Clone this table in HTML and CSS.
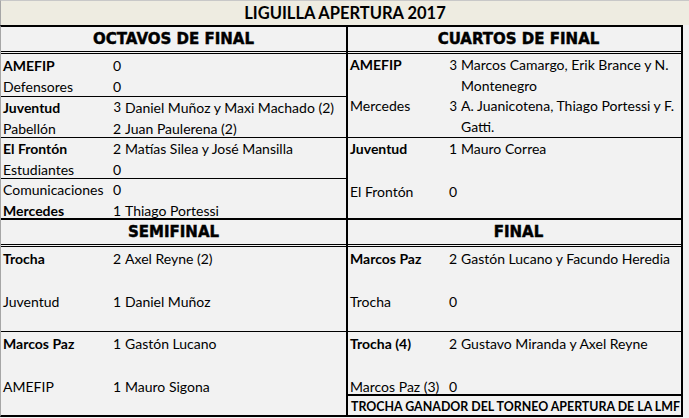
FILE: index.html
```html
<!DOCTYPE html>
<html lang="es">
<head>
<meta charset="utf-8">
<title>Liguilla Apertura 2017</title>
<link rel="stylesheet" href="styles.css">
</head>
<body>
<div class="sheet">
  <div class="title-band"><span class="title">LIGUILLA APERTURA 2017</span></div>
  <div class="board">
    <div class="stage">
      <div class="col col-left">
        <div class="head">OCTAVOS DE FINAL</div>
        <div class="match m1">
          <div class="line"><span class="team win">AMEFIP</span><span class="score">0</span><span class="scorers"></span></div>
          <div class="line"><span class="team">Defensores</span><span class="score">0</span><span class="scorers"></span></div>
        </div>
        <div class="match m2">
          <div class="line"><span class="team win">Juventud</span><span class="score small">3</span><span class="scorers">Daniel Muñoz y Maxi Machado (2)</span></div>
          <div class="line"><span class="team">Pabellón</span><span class="score">2</span><span class="scorers">Juan Paulerena (2)</span></div>
        </div>
        <div class="match m3">
          <div class="line"><span class="team win">El Frontón</span><span class="score">2</span><span class="scorers">Matías Silea y José Mansilla</span></div>
          <div class="line"><span class="team">Estudiantes</span><span class="score">0</span><span class="scorers"></span></div>
        </div>
        <div class="match m4 last">
          <div class="line"><span class="team">Comunicaciones</span><span class="score">0</span><span class="scorers"></span></div>
          <div class="line"><span class="team win">Mercedes</span><span class="score">1</span><span class="scorers">Thiago Portessi</span></div>
        </div>
      </div>
      <div class="col col-right">
        <div class="head">CUARTOS DE FINAL</div>
        <div class="match qa">
          <div class="line wrap"><span class="team win">AMEFIP</span><span class="score small">3</span><span class="scorers">Marcos Camargo, Erik Brance y N.<br>Montenegro</span></div>
          <div class="line wrap"><span class="team">Mercedes</span><span class="score small">3</span><span class="scorers">A. Juanicotena, Thiago Portessi y F.<br>Gatti.</span></div>
        </div>
        <div class="match qb last">
          <div class="line"><span class="team win">Juventud</span><span class="score">1</span><span class="scorers">Mauro Correa</span></div>
          <div class="line far"><span class="team">El Frontón</span><span class="score">0</span><span class="scorers"></span></div>
        </div>
      </div>
    </div>
    <div class="stage stage-last">
      <div class="col col-left">
        <div class="head">SEMIFINAL</div>
        <div class="match sa">
          <div class="line"><span class="team win">Trocha</span><span class="score">2</span><span class="scorers">Axel Reyne (2)</span></div>
          <div class="line far"><span class="team">Juventud</span><span class="score">1</span><span class="scorers">Daniel Muñoz</span></div>
        </div>
        <div class="match sb last">
          <div class="line"><span class="team win">Marcos Paz</span><span class="score">1</span><span class="scorers">Gastón Lucano</span></div>
          <div class="line far"><span class="team">AMEFIP</span><span class="score">1</span><span class="scorers">Mauro Sigona</span></div>
        </div>
      </div>
      <div class="col col-right">
        <div class="head">FINAL</div>
        <div class="match fa">
          <div class="line"><span class="team win">Marcos Paz</span><span class="score">2</span><span class="scorers">Gastón Lucano y Facundo Heredia</span></div>
          <div class="line far"><span class="team">Trocha</span><span class="score">0</span><span class="scorers"></span></div>
        </div>
        <div class="match fb">
          <div class="line"><span class="team win">Trocha (4)</span><span class="score">2</span><span class="scorers">Gustavo Miranda y Axel Reyne</span></div>
          <div class="line far"><span class="team">Marcos Paz (3)</span><span class="score">0</span><span class="scorers"></span></div>
        </div>
        <div class="champion">TROCHA GANADOR DEL TORNEO APERTURA DE LA LMF</div>
      </div>
    </div>
  </div>
</div>
</body>
</html>
```

FILE: styles.css
```css
* {
  box-sizing: border-box;
  margin: 0;
  padding: 0;
}

body {
  margin: 0;
  background: #F2F2F2;
  font-family: Lato, "Liberation Sans", sans-serif;
  font-size: 14px;
  color: #000;
}

.sheet {
  width: 689px;
  height: 418px;
  overflow: hidden;
}

.title-band {
  height: 25px;
  background: #EEECE1;
  border-top: 1px solid #c8c8c8;
  border-left: 1px solid #a6a6a6;
  display: flex;
  align-items: center;
  justify-content: center;
}

.title {
  font-weight: 700;
  font-size: 16.5px;
  line-height: 24px;
}

.board {
  width: 683px;
  border-top: 2px solid #000;
  border-right: 2px solid #000;
  border-bottom: 2px solid #000;
  border-left: 1px solid #a6a6a6;
}

.stage {
  display: flex;
  border-bottom: 2px solid #000;
}

.stage-last {
  border-bottom: 0;
}

.col {
  display: flex;
  flex-direction: column;
}

.col-left {
  flex: 0 0 347px;
  width: 347px;
  border-right: 2px solid #000;
}

.col-right {
  flex: 1 1 0;
  min-width: 0;
}

.head {
  height: 27px;
  border-bottom: 3px double #000;
  display: flex;
  align-items: center;
  justify-content: center;
  font-family: "DejaVu Sans", sans-serif;
  font-weight: 700;
  font-size: 15px;
  -webkit-text-stroke: 0.45px #000;
}

.col-right .head {
  padding-left: 8px;
}

.match {
  border-bottom: 1px solid #000;
}

.match.last {
  border-bottom: 0;
}

.line {
  display: grid;
  grid-template-columns: 109px 11px 1fr;
  align-items: start;
  line-height: 21px;
  height: 21px;
  white-space: nowrap;
}

.col-right .line {
  grid-template-columns: 100px 9px 1fr;
}

.line.wrap {
  height: auto;
  line-height: 20.5px;
}

.team {
  padding-left: 2px;
}

.team.win {
  font-weight: 700;
}

.score {
  text-align: right;
}

.score.small {
  font-size: 13px;
  line-height: 20px;
}

.scorers {
  padding-left: 4px;
}

/* octavos */
.m1 { height: 43px; padding-top: 1px; }
.m2 { height: 41px; }
.m3 { height: 41px; }
.m4 { height: 39px; }

/* cuartos */
.qa { height: 84px; padding-top: 1px; }
.qb { height: 80px; }

/* semifinal / final */
.sa, .fa { height: 85px; padding-top: 1px; }
.sb { height: 83px; padding-top: 1px; }
.fb { height: 64px; padding-top: 1px; border-bottom: 2px solid #000; }

.line.far {
  margin-top: 22px;
}

.champion {
  height: 19px;
  line-height: 21px;
  padding-left: 3px;
  font-weight: 700;
  font-size: 12.4px;
  white-space: nowrap;
  overflow: hidden;
}
```
